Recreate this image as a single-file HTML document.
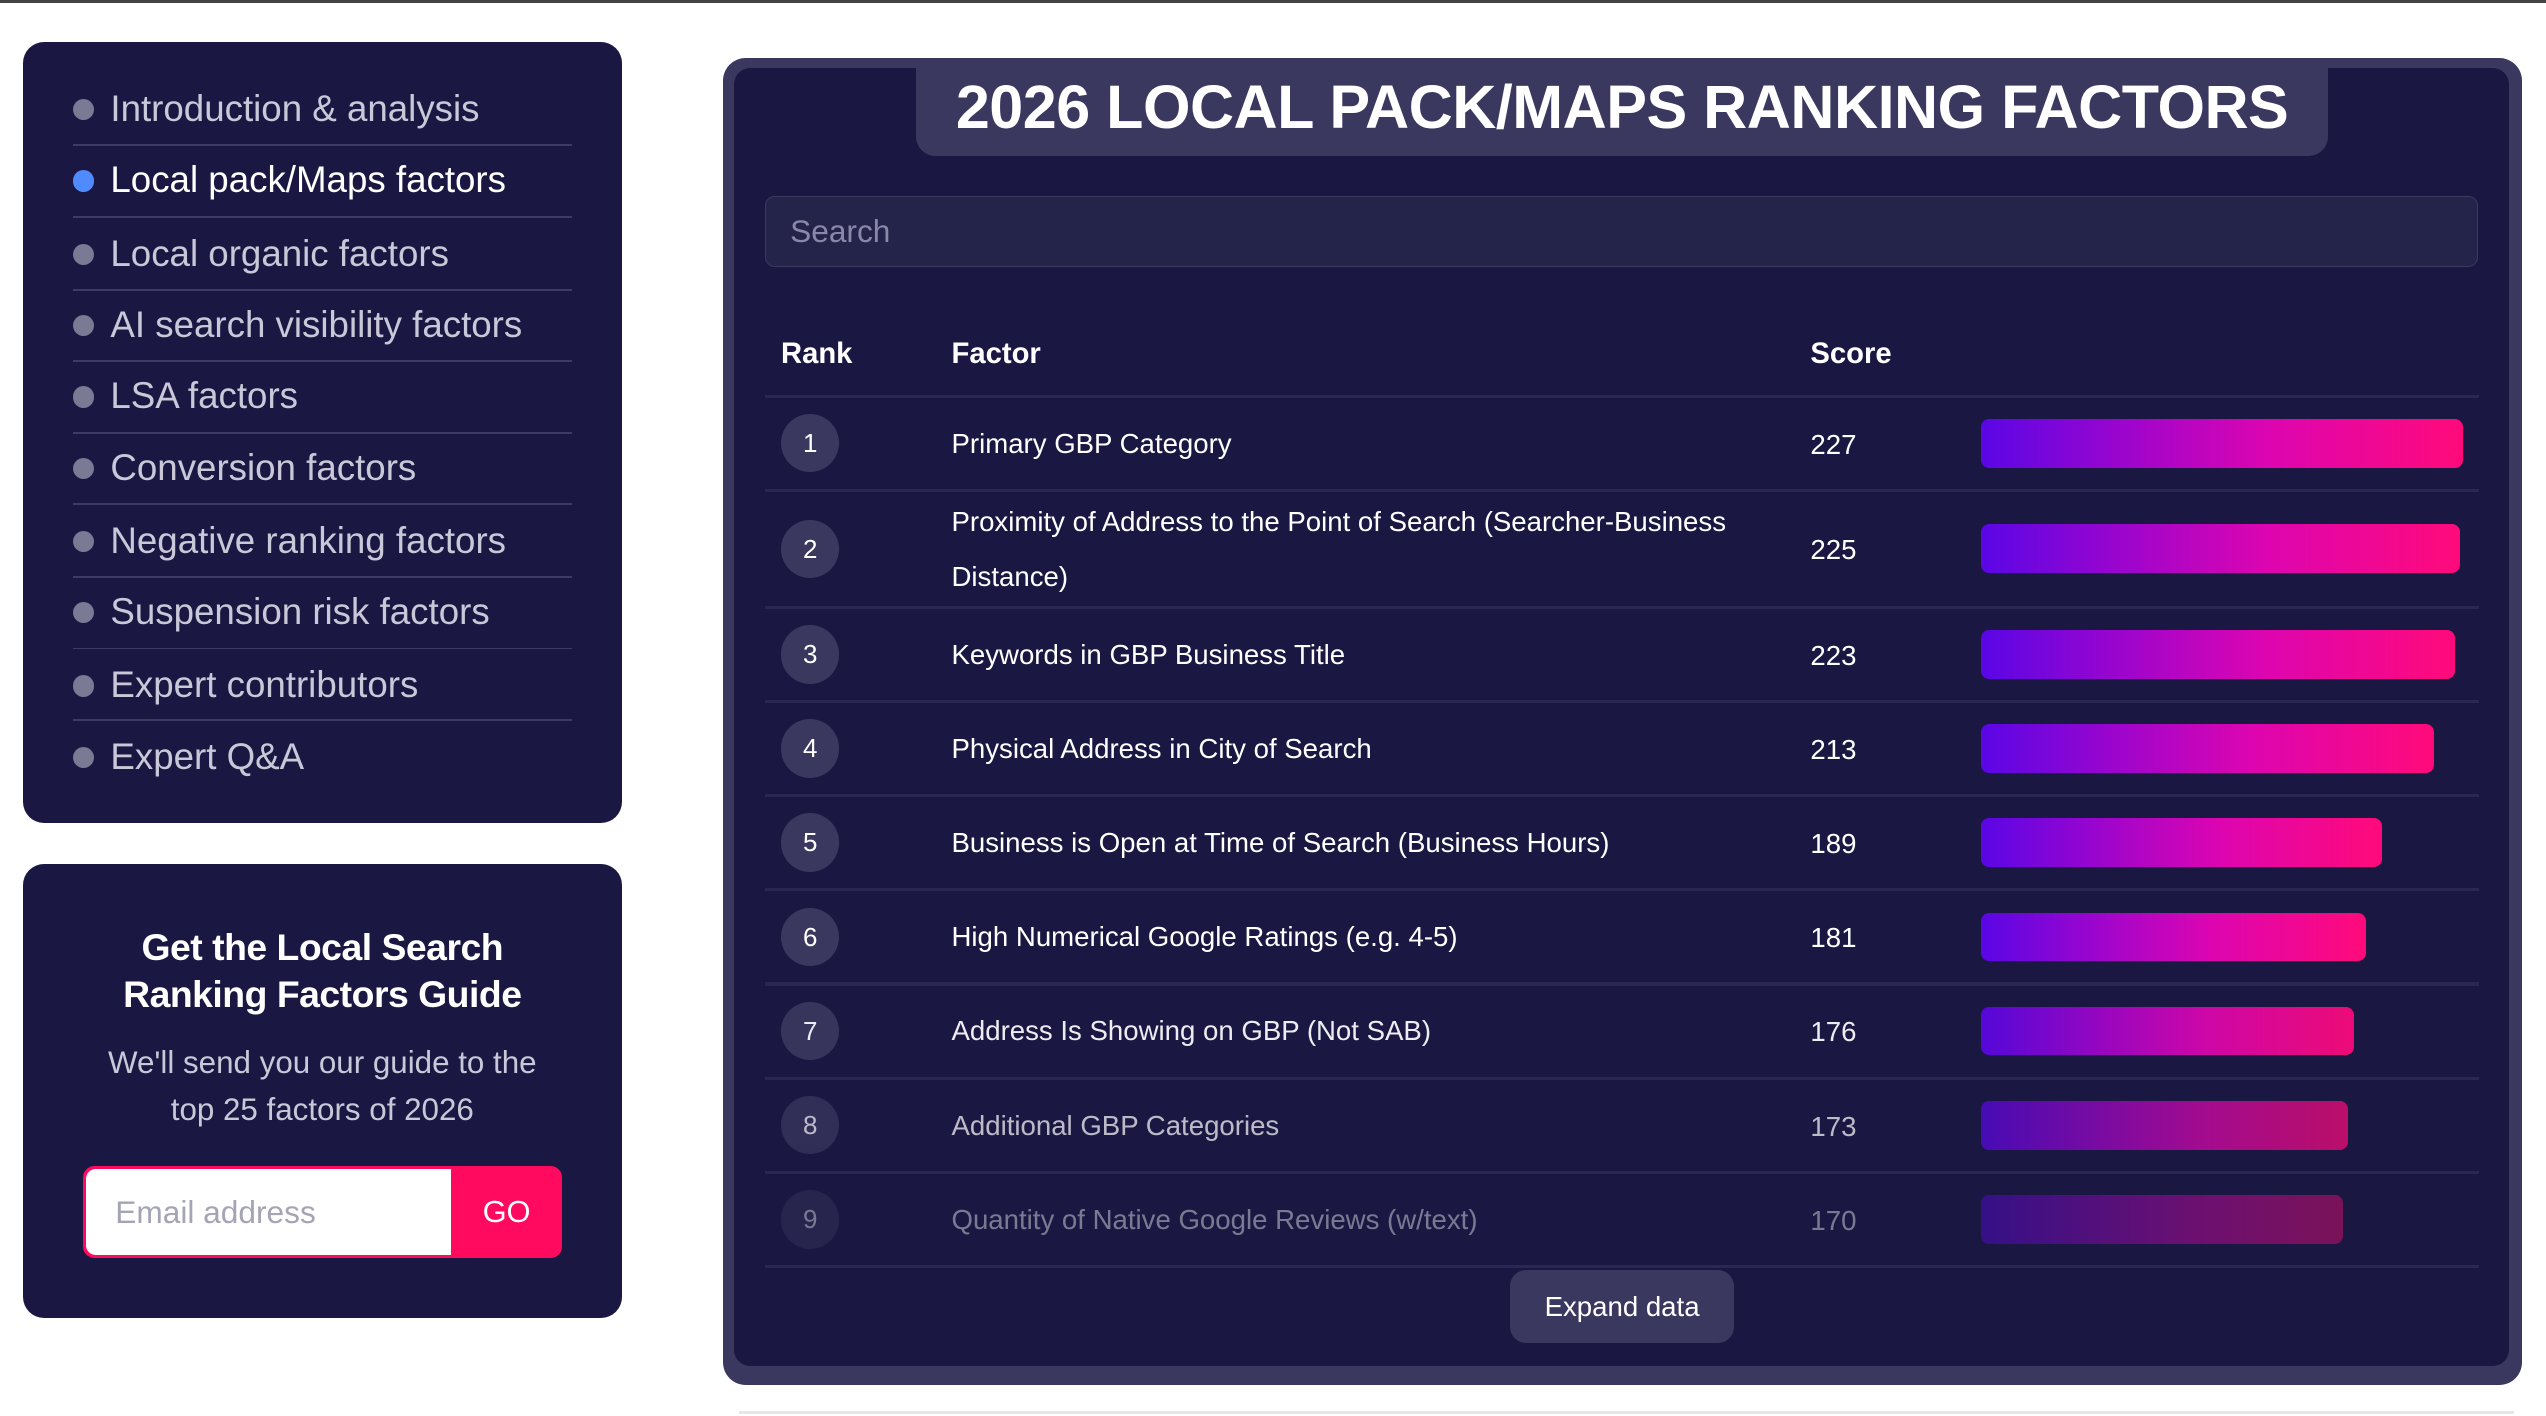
<!DOCTYPE html>
<html><head><meta charset="utf-8"><style>
html,body{margin:0;padding:0;background:#fff;}
body{width:1568px;height:872px;zoom:1.62372;position:relative;overflow:hidden;font-family:"Liberation Sans",Arial,sans-serif;}
.topline{position:absolute;left:0;top:0;width:1568px;height:2px;background:#444;}
.card{position:absolute;background:#1a1842;border-radius:13px;}
.nav{left:14px;top:26px;width:369px;height:481px;}
.item{position:absolute;left:31px;width:307px;height:44px;color:#c9c8d8;font-size:22.6px;line-height:44px;}
.item .dot{position:absolute;left:0;top:16px;width:13px;height:13px;border-radius:50%;background:#7b7a94;}
.item span{position:absolute;left:23px;top:0;white-space:nowrap;}
.item.on{color:#fff;} .item.on .dot{background:#4f8bff;}
.div{position:absolute;left:31px;width:307px;height:1px;background:#3d3b63;}
.promo{left:14px;top:532px;width:369px;height:280px;text-align:center;}
.promo h2{position:absolute;left:0;width:369px;top:37px;margin:0;color:#fff;font-size:23px;line-height:29px;font-weight:bold;letter-spacing:-0.3px;}
.promo p{position:absolute;left:0;width:369px;top:108px;margin:0;color:#c9c8d8;font-size:19.3px;line-height:29px;}
.email{position:absolute;left:37px;top:186px;width:295px;height:57px;border-radius:7px;background:#ff0a5e;overflow:hidden;}
.email .in{position:absolute;left:2px;top:2px;width:225px;height:53px;background:#fff;border-radius:6px 0 0 6px;color:#a4a4b4;font-size:19.5px;line-height:53px;text-indent:18px;text-align:left;}
.email .go{position:absolute;left:227px;top:0;width:68px;height:57px;color:#fff;font-size:19px;line-height:57px;text-align:center;}
.panel{position:absolute;left:445px;top:36px;width:1108px;height:817px;background:#3b3860;border-radius:14px;}
.inner{position:absolute;left:7px;top:6px;width:1093px;height:799px;background:#1a1842;border-radius:10px;}
.tab{position:absolute;left:112px;top:0;width:870px;height:54px;background:#3b3860;border-radius:0 0 12px 12px;color:#fff;font-weight:bold;font-size:37.6px;line-height:49px;text-align:center;letter-spacing:-0.3px;}
.search{position:absolute;left:19px;top:79px;width:1054px;height:42px;background:#24234a;border:1px solid #3b3a60;border-radius:6px;color:#8a88a8;font-size:19.5px;line-height:42px;text-indent:15px;}
.th{position:absolute;top:166px;color:#fff;font-weight:bold;font-size:18px;}
.hr{position:absolute;left:19px;width:1056px;height:2px;background:#2a2852;}
.row{position:absolute;left:0;width:1093px;}
.num{position:absolute;left:29px;width:36px;height:36px;border-radius:50%;background:#3b3860;color:#fff;font-size:16px;line-height:36px;text-align:center;}
.fac{position:absolute;left:134px;color:#fff;font-size:17px;line-height:34px;white-space:nowrap;}
.sc{position:absolute;left:663px;color:#fff;font-size:17px;}
.bar{position:absolute;left:768px;height:30px;border-radius:5px;background:linear-gradient(90deg,#5a06e6 0%,#a805c8 35%,#dd05b0 60%,#ff0a7a 100%);}
.btn{position:absolute;left:478px;top:740px;width:138px;height:45px;background:#3b3860;border-radius:10px;color:#fff;font-size:17px;line-height:45px;text-align:center;}
.bottomline{position:absolute;left:455px;top:869px;width:1093px;height:2px;background:#e5e5ea;}
</style></head><body>
<div class="topline"></div>
<div class="card nav">
<div class="item" style="top:19px"><div class="dot"></div><span>Introduction &amp; analysis</span></div>
<div class="div" style="top:63px"></div>
<div class="item on" style="top:63px"><div class="dot"></div><span>Local pack/Maps factors</span></div>
<div class="div" style="top:107px"></div>
<div class="item" style="top:108px"><div class="dot"></div><span>Local organic factors</span></div>
<div class="div" style="top:152px"></div>
<div class="item" style="top:152px"><div class="dot"></div><span>AI search visibility factors</span></div>
<div class="div" style="top:196px"></div>
<div class="item" style="top:196px"><div class="dot"></div><span>LSA factors</span></div>
<div class="div" style="top:240px"></div>
<div class="item" style="top:240px"><div class="dot"></div><span>Conversion factors</span></div>
<div class="div" style="top:284px"></div>
<div class="item" style="top:285px"><div class="dot"></div><span>Negative ranking factors</span></div>
<div class="div" style="top:329px"></div>
<div class="item" style="top:329px"><div class="dot"></div><span>Suspension risk factors</span></div>
<div class="div" style="top:373px"></div>
<div class="item" style="top:374px"><div class="dot"></div><span>Expert contributors</span></div>
<div class="div" style="top:417px"></div>
<div class="item" style="top:418px"><div class="dot"></div><span>Expert Q&amp;A</span></div>
</div>
<div class="card promo">
<h2>Get the Local Search<br>Ranking Factors Guide</h2>
<p>We'll send you our guide to the<br>top 25 factors of 2026</p>
<div class="email"><div class="in">Email address</div><div class="go">GO</div></div>
</div>
<div class="panel"><div class="inner">
<div class="tab">2026 LOCAL PACK/MAPS RANKING FACTORS</div>
<div class="search">Search</div>
<div class="th" style="left:29px">Rank</div><div class="th" style="left:134px">Factor</div><div class="th" style="left:663px">Score</div>
<div class="hr" style="top:201px"></div>
<div class="row" style="top:203px"><div class="num" style="top:10px">1</div><div class="fac" style="top:11px">Primary GBP Category</div><div class="sc" style="top:19px">227</div><div class="bar" style="top:13px;width:297px"></div></div>
<div class="hr" style="top:259px"></div>
<div class="row" style="top:261px"><div class="num" style="top:17px">2</div><div class="fac" style="top:1px">Proximity of Address to the Point of Search (Searcher-Business<br>Distance)</div><div class="sc" style="top:26px">225</div><div class="bar" style="top:20px;width:295px"></div></div>
<div class="hr" style="top:331px"></div>
<div class="row" style="top:333px"><div class="num" style="top:10px">3</div><div class="fac" style="top:11px">Keywords in GBP Business Title</div><div class="sc" style="top:19px">223</div><div class="bar" style="top:13px;width:292px"></div></div>
<div class="hr" style="top:389px"></div>
<div class="row" style="top:391px"><div class="num" style="top:10px">4</div><div class="fac" style="top:11px">Physical Address in City of Search</div><div class="sc" style="top:19px">213</div><div class="bar" style="top:13px;width:279px"></div></div>
<div class="hr" style="top:447px"></div>
<div class="row" style="top:449px"><div class="num" style="top:10px">5</div><div class="fac" style="top:11px">Business is Open at Time of Search (Business Hours)</div><div class="sc" style="top:19px">189</div><div class="bar" style="top:13px;width:247px"></div></div>
<div class="hr" style="top:505px"></div>
<div class="row" style="top:507px"><div class="num" style="top:10px">6</div><div class="fac" style="top:11px">High Numerical Google Ratings (e.g. 4-5)</div><div class="sc" style="top:19px">181</div><div class="bar" style="top:13px;width:237px"></div></div>
<div class="hr" style="top:563px"></div>
<div class="row" style="top:565px;opacity:.92"><div class="num" style="top:10px">7</div><div class="fac" style="top:11px">Address Is Showing on GBP (Not SAB)</div><div class="sc" style="top:19px">176</div><div class="bar" style="top:13px;width:230px"></div></div>
<div class="hr" style="top:621px"></div>
<div class="row" style="top:623px;opacity:.7"><div class="num" style="top:10px">8</div><div class="fac" style="top:11px">Additional GBP Categories</div><div class="sc" style="top:19px">173</div><div class="bar" style="top:13px;width:226px"></div></div>
<div class="hr" style="top:679px"></div>
<div class="row" style="top:681px;opacity:.42"><div class="num" style="top:10px">9</div><div class="fac" style="top:11px">Quantity of Native Google Reviews (w/text)</div><div class="sc" style="top:19px">170</div><div class="bar" style="top:13px;width:223px"></div></div>
<div class="hr" style="top:737px"></div>
<div class="btn">Expand data</div>
</div></div>
<div class="bottomline"></div>
</body></html>
